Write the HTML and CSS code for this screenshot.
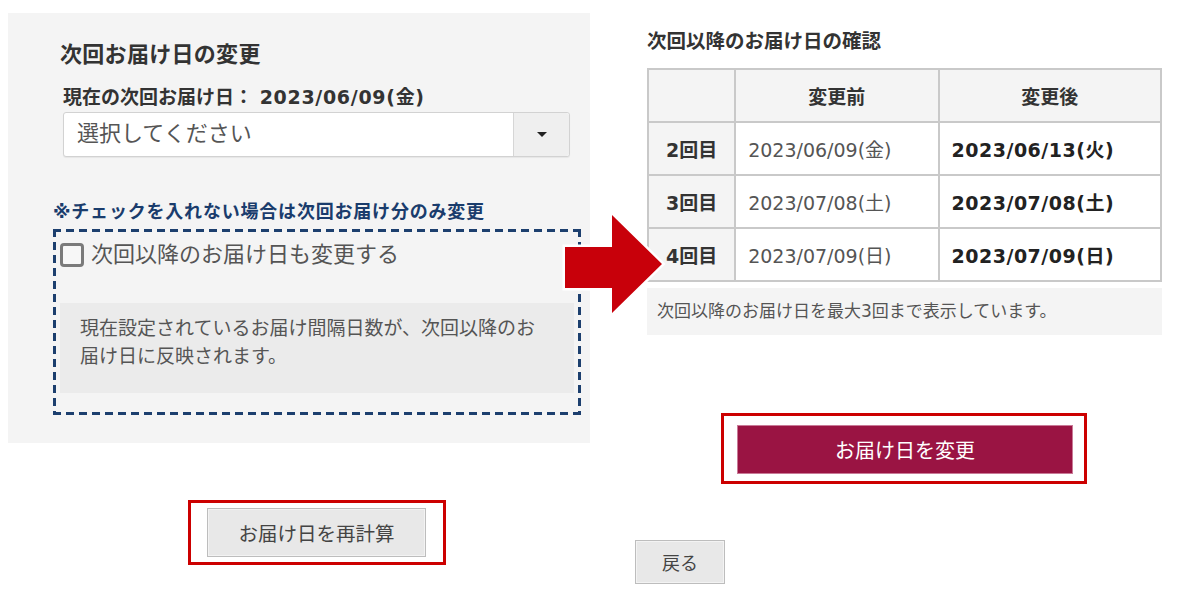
FILE: index.html
```html
<!DOCTYPE html>
<html lang="ja">
<head>
<meta charset="utf-8">
<title>お届け日の変更</title>
<link rel="stylesheet" href="styles.css">
</head>
<body>
<div class="page">
  <div class="left-col">
    <section class="panel">
      <h2 class="panel-title">次回お届け日の変更</h2>
      <p class="current">現在の次回お届け日： <span class="current-date">2023/06/09(金)</span></p>
      <div class="select">
        <span class="select-text">選択してください</span>
        <span class="select-btn"><span class="caret"></span></span>
      </div>
      <p class="notice">※チェックを入れない場合は次回お届け分のみ変更</p>
      <div class="dash-box">
        <label class="check-row">
          <span class="checkbox"></span>
          <span class="check-label">次回以降のお届け日も変更する</span>
        </label>
        <div class="info-box">現在設定されているお届け間隔日数が、次回以降のお届け日に反映されます。</div>
      </div>
    </section>
    <div class="highlight recalc-wrap">
      <button class="btn-gray recalc">お届け日を再計算</button>
    </div>
  </div>

  <div class="right-col">
    <h3 class="confirm-title">次回以降のお届け日の確認</h3>
    <table class="dates">
      <thead>
        <tr><th class="c1"></th><th class="c2">変更前</th><th class="c3">変更後</th></tr>
      </thead>
      <tbody>
        <tr><th>2回目</th><td class="before">2023/06/09(金)</td><td class="after">2023/06/13(火)</td></tr>
        <tr><th>3回目</th><td class="before">2023/07/08(土)</td><td class="after">2023/07/08(土)</td></tr>
        <tr><th>4回目</th><td class="before">2023/07/09(日)</td><td class="after">2023/07/09(日)</td></tr>
      </tbody>
    </table>
    <p class="table-note">次回以降のお届け日を最大3回まで表示しています。</p>
    <div class="highlight change-wrap">
      <button class="btn-primary">お届け日を変更</button>
    </div>
    <button class="btn-gray back">戻る</button>
  </div>

  <svg class="arrow" width="116" height="116" viewBox="558 208 116 116" aria-hidden="true">
    <polygon points="565,247 612,247 612,215 662,264 612,313 612,288 565,288" fill="#c8000a" stroke="#ffffff" stroke-width="5" stroke-linejoin="miter" paint-order="stroke"/>
  </svg>
</div>
</body>
</html>
```

FILE: styles.css
```css
* { box-sizing: border-box; }

html, body {
  margin: 0;
  padding: 0;
  background: #ffffff;
}

body {
  font-family: "DejaVu Sans", "Noto Sans CJK JP", sans-serif;
  color: #444;
  width: 1200px;
  height: 590px;
  overflow: hidden;
}

.page {
  position: relative;
  display: flex;
  align-items: flex-start;
}

/* ---------- left column ---------- */
.left-col {
  width: 590px;
  padding-left: 8px;
  padding-top: 13px;
}

.panel {
  background: #f4f4f4;
  width: 582px;
  height: 430px;
  padding-top: 27px;
}

.panel-title {
  margin: 0 0 0 52px;
  font-size: 22px;
  line-height: 30px;
  font-weight: bold;
  color: #333;
  letter-spacing: 0.3px;
}

.current {
  margin: 14px 0 0 55px;
  font-size: 19px;
  line-height: 26px;
  font-weight: bold;
  color: #333;
}

.current-date {
  letter-spacing: 0.7px;
}

.select {
  margin: 2px 0 0 55px;
  width: 507px;
  height: 45px;
  display: flex;
  background: #fff;
  border: 1px solid #d2d2d2;
  border-radius: 3px;
  box-shadow: 0 1px 1px rgba(0,0,0,0.06);
}

.select-text {
  flex: 1;
  padding-left: 13px;
  font-size: 22px;
  line-height: 41px;
  color: #555;
}

.select-btn {
  width: 56px;
  background: #efefef;
  border-left: 1px solid #d6d6d6;
  display: flex;
  align-items: center;
  justify-content: center;
  border-radius: 0 3px 3px 0;
}

.caret {
  width: 0;
  height: 0;
  border-left: 5px solid transparent;
  border-right: 5px solid transparent;
  border-top: 5px solid #222;
}

.notice {
  margin: 43px 0 0 45px;
  font-size: 18px;
  line-height: 24px;
  font-weight: bold;
  color: #1a3c6c;
  letter-spacing: 0.8px;
}

.dash-box {
  margin: 5px 0 0 45px;
  width: 528px;
  height: 186px;
  padding: 14px 7px 0 7px;
  background:
    repeating-linear-gradient(90deg, #1c3f6e 0 8px, transparent 8px 13px) left top / 100% 3px no-repeat,
    repeating-linear-gradient(90deg, #1c3f6e 0 8px, transparent 8px 13px) left bottom / 100% 3px no-repeat,
    repeating-linear-gradient(180deg, #1c3f6e 0 8px, transparent 8px 13px) left top / 3px 100% no-repeat,
    repeating-linear-gradient(180deg, #1c3f6e 0 8px, transparent 8px 13px) right top / 3px 100% no-repeat;
}

.check-row {
  display: flex;
  align-items: center;
  height: 24px;
  gap: 7px;
}

.checkbox {
  width: 24px;
  height: 24px;
  border: 3px solid #7a7a7a;
  border-radius: 4px;
  background: #f7f7f7;
}

.check-label {
  font-size: 22px;
  line-height: 24px;
  color: #555;
}

.info-box {
  margin-top: 36px;
  height: 90px;
  background: #ebebeb;
  padding: 11px 30px 0 20px;
  font-size: 19px;
  line-height: 28px;
  color: #555;
}

.highlight {
  border: 3px solid #cc0000;
}

.recalc-wrap {
  margin: 57px 0 0 180px;
  width: 258px;
  height: 65px;
  padding: 5px 0 0 16px;
}

.btn-gray {
  font-family: inherit;
  background: #e8e8e8;
  border: 1px solid #bdbdbd;
  box-shadow: inset 0 0 0 1px #f3f3f3;
  color: #444;
  padding: 0;
  cursor: pointer;
}

.recalc {
  width: 219px;
  height: 49px;
  font-size: 19.5px;
}

/* ---------- right column ---------- */
.right-col {
  margin-left: 45px;
  width: 530px;
  padding-top: 29px;
}

.confirm-title {
  margin: 0 0 0 12px;
  font-size: 19.5px;
  line-height: 26px;
  font-weight: bold;
  color: #333;
}

.dates {
  margin: 13px 0 0 12px;
  width: 515px;
  border-collapse: collapse;
  border: 2px solid #c9c9c9;
}

.dates th,
.dates td {
  border: 2px solid #c9c9c9;
  height: 53px;
  padding: 0;
  font-size: 19px;
}

.dates thead th {
  background: #f4f4f4;
  font-weight: bold;
  color: #333;
  text-align: center;
}

.dates .c1 { width: 88px; }
.dates .c2 { width: 204px; }
.dates .c3 { width: 223px; }

.dates tbody th {
  background: #f4f4f4;
  font-weight: bold;
  color: #333;
  text-align: center;
}

.dates td.before {
  background: #fff;
  color: #555;
  padding-left: 12px;
}

.dates td.after {
  background: #fff;
  color: #222;
  font-weight: bold;
  padding-left: 12px;
  letter-spacing: 0.5px;
}

.table-note {
  margin: 6px 0 0 12px;
  width: 515px;
  height: 47px;
  background: #f4f4f4;
  padding-left: 10px;
  font-size: 17px;
  line-height: 47px;
  color: #555;
}

.change-wrap {
  margin: 78px 0 0 86px;
  width: 366px;
  height: 71px;
  padding: 9px 0 0 13px;
}

.btn-primary {
  font-family: inherit;
  width: 336px;
  height: 49px;
  background: #9a1443;
  border: 1px solid #c97a97;
  color: #fff;
  font-size: 20px;
  padding: 0;
  cursor: pointer;
}

.back {
  margin-top: 56px;
  width: 90px;
  height: 44px;
  font-size: 18px;
}

/* ---------- arrow overlay ---------- */
.arrow {
  position: absolute;
  left: 558px;
  top: 208px;
}
```
